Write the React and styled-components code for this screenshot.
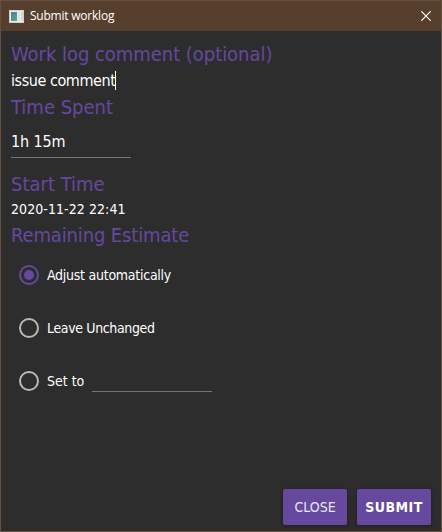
import React from "react";
import styled, { createGlobalStyle } from "styled-components";

const GlobalStyle = createGlobalStyle`
  * { box-sizing: border-box; }
  body { margin: 0; background: #2d2d2d; }
`;

const Dialog = styled.div`
  width: 442px;
  height: 532px;
  display: flex;
  flex-direction: column;
  background: #2d2d2d;
  border: 1px solid #66503f;
  color: #fff;
  font-family: "DejaVu Sans Condensed", "DejaVu Sans", sans-serif;
  font-stretch: condensed;
  white-space: nowrap;
`;

const TitleBar = styled.header`
  height: 30px;
  flex: none;
  display: flex;
  align-items: center;
  padding: 0 10px 0 8px;
  background: #573f2d;
`;

const Title = styled.span`
  flex: 1;
  margin-left: 6px;
  font: 12px/16px "Open Sans", sans-serif;
  font-stretch: normal;
  letter-spacing: -0.22px;
`;

const Content = styled.main`
  flex: 1;
  display: flex;
  flex-direction: column;
  padding: 11px 10px 0;
`;

const Heading = styled.h2`
  margin: ${(p) => p.$gap || 0}px 0 0;
  font-size: 20px;
  font-weight: 400;
  line-height: 24px;
  color: #66489f;
  letter-spacing: ${(p) => p.$spacing || "0"};
`;

const Comment = styled.div`
  height: 29px;
  display: flex;
  align-items: center;
  font-size: 16px;
  letter-spacing: -0.43px;
`;

const Caret = styled.span`
  width: 1px;
  height: 19px;
  background: #fff;
`;

const Field = styled.div`
  width: 120px;
  height: ${(p) => p.$height}px;
  border-bottom: 1px solid #757575;
  font-size: 16px;
  line-height: ${(p) => p.$height - 1}px;
  letter-spacing: -0.15px;
`;

const TimeField = styled(Field)`
  margin-top: 7px;
`;

const DateText = styled.div`
  font-size: 14px;
  line-height: 26px;
  letter-spacing: 0.07px;
`;

const Options = styled.div`
  display: grid;
  grid-auto-rows: 53px;
  margin-top: 1px;
`;

const Option = styled.label`
  display: flex;
  align-items: center;
  padding-left: 8px;
  font-size: 14px;
`;

const OptionText = styled.span`
  margin: 0 8px;
  letter-spacing: ${(p) => p.$spacing || "0"};
`;

const Radio = styled.span`
  width: 20px;
  height: 20px;
  flex: none;
  display: grid;
  place-items: center;
  border-radius: 50%;
  border: 2px solid ${(p) => (p.$checked ? "#66489f" : "#b9b9b9")};

  &::after {
    content: "";
    width: 10px;
    height: 10px;
    border-radius: 50%;
    background: ${(p) => (p.$checked ? "#66489f" : "transparent")};
  }
`;

const Footer = styled.footer`
  height: 49px;
  display: flex;
  justify-content: flex-end;
  align-items: flex-start;
  gap: 10px;
  padding: 7px 10px 0 0;
`;

const Button = styled.button`
  width: ${(p) => p.$width}px;
  height: 36px;
  padding: 0;
  border: 0;
  border-radius: 2px;
  background: #66489f;
  color: ${(p) => (p.$strong ? "#fff" : "#eae4f4")};
  font-family: inherit;
  font-stretch: inherit;
  font-size: 14px;
  font-weight: ${(p) => (p.$strong ? 700 : 400)};
  letter-spacing: ${(p) => p.$spacing || "0"};
  box-shadow: 0 1px 4px rgba(0, 0, 0, 0.35);
`;

const WindowIcon = () => (
  <svg width="15" height="13" viewBox="0 0 15 13">
    <defs>
      <linearGradient id="pane" x1="0" y1="0" x2="0.6" y2="1">
        <stop offset="0" stopColor="#4f7ba8" />
        <stop offset="1" stopColor="#58a57d" />
      </linearGradient>
    </defs>
    <rect width="15" height="13" fill="#eeeeee" />
    <path d="M.5 .5h14v12H.5z" fill="none" stroke="#cfcfcf" />
    <rect x="2" y="2" width="6" height="9" fill="url(#pane)" />
    <rect x="9" y="2" width="2" height="9" fill="#e0e2e2" />
    <rect x="12" y="2" width="2" height="9" fill="#d3d8d6" />
  </svg>
);

const CloseIcon = () => (
  <svg width="10" height="10" viewBox="0 0 10 10">
    <path d="M.3 .3L9.7 9.7M9.7 .3L.3 9.7" stroke="#fff" strokeWidth="1.2" />
  </svg>
);

export default function App() {
  return (
    <>
      <GlobalStyle />
      <Dialog>
        <TitleBar>
          <WindowIcon />
          <Title>Submit worklog</Title>
          <CloseIcon />
        </TitleBar>
        <Content>
          <Heading $spacing="-0.04px">Work log comment (optional)</Heading>
          <Comment>
            issue comment
            <Caret />
          </Comment>
          <Heading>Time Spent</Heading>
          <TimeField $height={32}>1h 15m</TimeField>
          <Heading $gap={14}>Start Time</Heading>
          <DateText>2020-11-22 22:41</DateText>
          <Heading $gap={1} $spacing="-0.14px">Remaining Estimate</Heading>
          <Options>
            <Option>
              <Radio $checked />
              <OptionText $spacing="-0.26px">Adjust automatically</OptionText>
            </Option>
            <Option>
              <Radio />
              <OptionText $spacing="-0.36px">Leave Unchanged</OptionText>
            </Option>
            <Option>
              <Radio />
              <OptionText>Set to</OptionText>
              <Field $height={22} />
            </Option>
          </Options>
        </Content>
        <Footer>
          <Button $width={64}>CLOSE</Button>
          <Button $width={74} $strong $spacing="0.5px">SUBMIT</Button>
        </Footer>
      </Dialog>
    </>
  );
}
